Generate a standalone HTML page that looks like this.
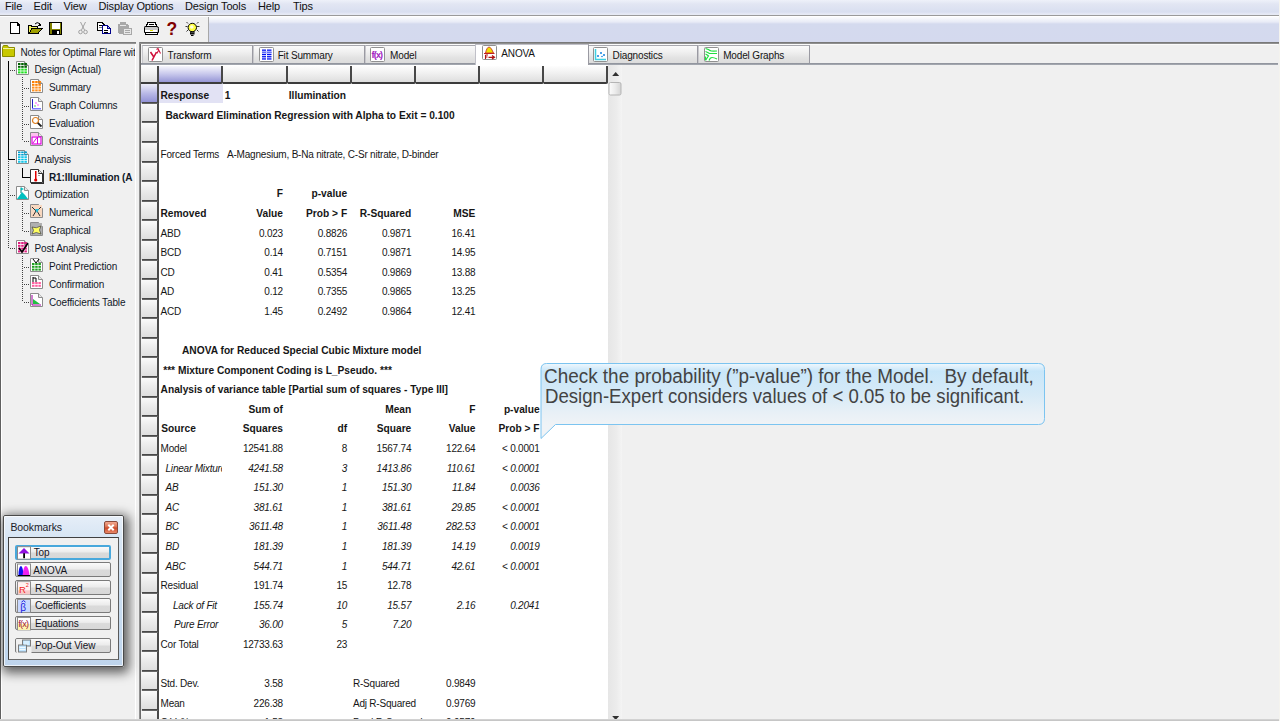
<!DOCTYPE html><html><head><meta charset="utf-8"><style>

*{margin:0;padding:0;box-sizing:border-box}
html,body{width:1280px;height:721px;overflow:hidden;background:#f0f0f0;font-family:"Liberation Sans",sans-serif;color:#000;position:relative}
.a{position:absolute}
.t{position:absolute;white-space:pre;line-height:1}
#menu{left:0;top:0;width:1280px;height:15px;background:linear-gradient(#eef1f9 0px,#e2e6f3 4px,#d9dff0 12px,#e6eaf5 14px)}
#menu span{position:absolute;top:0px;font-size:11px;letter-spacing:-0.15px;color:#101010}
#menuline{left:0;top:15px;width:1280px;height:1px;background:#9a9a9a}
#menuw{left:0;top:16px;width:1280px;height:1px;background:#fff}
#tb{left:0;top:17px;width:209px;height:25px;background:#f0f0f0}
#tbsep{left:208px;top:17px;width:1px;height:25px;background:#a8a8a8}
#tb2{left:209px;top:17px;width:1071px;height:25px;background:linear-gradient(#fbfcfe 0px,#e8ebf6 5px,#d4daee 7px,#d4d9ee 25px)}
#tb2line{left:139px;top:42px;width:1141px;height:2px;background:linear-gradient(#6e6e6e,#9a9a9a)}
#tb2w{left:141px;top:44px;width:1137px;height:1px;background:#fbfbfb}
#treetop{left:0;top:42px;width:136px;height:2px;background:linear-gradient(#707070,#a0a0a0)}
#treeleft{left:0;top:42px;width:1px;height:679px;background:#606060}
#treeleft2{left:1px;top:44px;width:1px;height:677px;background:#fff}
#treeright{left:135px;top:44px;width:1px;height:677px;background:#fff}
#cleft{left:139px;top:42px;width:1px;height:679px;background:#909090}
#cleft2{left:140px;top:44px;width:1px;height:677px;background:#6a6a6a}
#bottom{left:0;top:719px;width:1280px;height:2px;background:linear-gradient(#d8d8d8,#c0c0c0)}
.tab{position:absolute;top:45px;height:19px;background:linear-gradient(#fafafa 0px,#f0f0f0 6px,#e2e2e2 12px,#dadada 19px);border-top:1px solid #a8a8ae;border-left:1px solid #c8c8cc;border-right:1px solid #9a9aa2}
.tab .tl{position:absolute;top:5px;font-size:10px;color:#111}
.tab .ic{position:absolute;top:1px;width:14px;height:14px;background:#fff;border:1px solid #8c8c8c;border-radius:1px}
#tabline{left:141px;top:63px;width:1137px;height:2px;background:linear-gradient(#8a8e98,#a9adb5)}
#tabactive{left:475px;top:44px;width:114px;height:22px;background:#fff;border-top:1px solid #c0c0c8;border-left:1px solid #c0c0c8;border-right:1px solid #9a9aa2}


#grid{left:141px;top:65px;width:467px;height:654px;background:#fff;overflow:hidden}
.hc{position:absolute;background:linear-gradient(#fdfdfd,#f2f2f2 40%,#dedede);}
.rl{position:absolute;left:1px;width:16px;height:2px;background:linear-gradient(#3a3a3a,#767676)}
#sb{left:608px;top:65px;width:14px;height:654px;background:linear-gradient(90deg,#e6e6e6,#ececec 60%,#f4f4f4)}

</style></head><body>
<div class="a" id="menu">
<span style="left:5px">File</span>
<span style="left:33.5px">Edit</span>
<span style="left:63.5px">View</span>
<span style="left:98.5px">Display Options</span>
<span style="left:185px">Design Tools</span>
<span style="left:258px">Help</span>
<span style="left:293px">Tips</span>
</div>
<div class="a" id="menuline"></div>
<div class="a" id="menuw"></div>
<div class="a" id="tb"></div>
<div class="a" id="tbsep"></div>
<div class="a" id="tb2"></div>
<div class="a" id="tb2line"></div>
<div class="a" id="tb2w"></div>
<div class="a" id="treetop"></div>
<div class="a" id="treeleft"></div>
<div class="a" id="treeleft2"></div>
<div class="a" id="treeright"></div>
<div class="a" id="cleft"></div>
<div class="a" id="cleft2"></div>
<div class="a" id="bottom"></div>
<svg class="a" style="left:0;top:0" width="220" height="42" viewBox="0 0 220 42" shape-rendering="crispEdges">
<path d="M10.5 22.5 H17 L19.5 25 V33.5 H10.5 Z" fill="#fff" stroke="#000" stroke-width="1"/>
<path d="M17 22.5 V25 H19.5" fill="none" stroke="#000"/>
<path d="M28.5 25.5 H31 L32 26.5 H37.5 V28.5 H32 L29 33.5 H28.5 Z" fill="#f0f060" stroke="#000"/>
<path d="M29 33.5 L32 28.5 H42 L38 33.5 Z" fill="#a0a000" stroke="#000"/>
<path d="M35 24 Q37 21.5 39.5 23.5" fill="none" stroke="#000" shape-rendering="auto"/>
<path d="M39 22.5 L41.5 25.5 L38.5 25.5 Z" fill="#000"/>
<rect x="49" y="22" width="12.5" height="12.5" fill="#000"/>
<rect x="50" y="23" width="1.5" height="11" fill="#808000"/>
<rect x="59.5" y="23" width="1.5" height="11" fill="#808000"/>
<rect x="51.5" y="22.5" width="8" height="6" fill="#fff"/>
<rect x="51" y="28.5" width="9" height="1.5" fill="#808000"/>
<rect x="57" y="30.5" width="2" height="3" fill="#fff"/>
<g fill="none" stroke="#a0a0a0" stroke-width="1" shape-rendering="auto">
<path d="M80.5 22 L84.5 30 M85.5 22 L81.5 30"/>
<circle cx="80.5" cy="32" r="1.8"/><circle cx="85.5" cy="32" r="1.8"/></g>
<path d="M97.5 22.5 H102 L104 24.5 V30.5 H97.5 Z" fill="#fff" stroke="#000"/>
<rect x="99" y="25" width="3" height="1" fill="#000"/><rect x="99" y="27" width="3" height="1" fill="#808080"/>
<path d="M102.5 25.5 H107 L110 28.5 V33.5 H102.5 Z" fill="#fff" stroke="#00008a"/>
<path d="M107 25.5 V28.5 H110" fill="#c0c0ff" stroke="#00008a"/>
<rect x="104" y="30" width="4" height="1" fill="#000"/><rect x="104" y="32" width="4" height="1" fill="#000"/>
<rect x="117.5" y="23.5" width="11" height="10" rx="1" fill="#a8a8a8"/>
<rect x="120" y="22" width="6" height="2.5" fill="#a8a8a8"/><rect x="120" y="25" width="6" height="1" fill="#e8e8e8"/>
<rect x="123" y="28" width="8" height="6.5" fill="#e8e8e8" stroke="#a8a8a8"/>
<rect x="124.5" y="30" width="5" height="1" fill="#a8a8a8"/><rect x="124.5" y="32" width="5" height="1" fill="#a8a8a8"/>
<path d="M147.5 22.5 H155.5 L156.5 26.5 H146.5 Z" fill="#fff" stroke="#000"/>
<rect x="149" y="24" width="5" height="1" fill="#000"/>
<path d="M144.5 27.5 Q144 26.5 146 26.5 H157 Q158.5 26.5 158.5 28.5 V32.5 H144.5 Z" fill="#c8c8c8" stroke="#000" shape-rendering="auto"/>
<rect x="145" y="30" width="12" height="1.5" fill="#fff"/><rect x="150" y="29.5" width="3" height="1" fill="#e0e000"/>
<rect x="145.5" y="32.5" width="12" height="2" fill="#fff" stroke="#000"/>
<text x="166.6" y="35" font-family="Liberation Sans" font-weight="bold" font-size="17.5" fill="#800000">?</text>
<g shape-rendering="auto">
<circle cx="192.3" cy="27.5" r="4.2" fill="#ffff40" stroke="#000" stroke-width="1"/>
<circle cx="191.8" cy="27" r="1.8" fill="#ffffe0"/>
<rect x="190" y="31.5" width="4.5" height="3" fill="#000"/><rect x="190.5" y="32.5" width="3.5" height="0.6" fill="#888"/>
<path d="M191 35.5 H193.5" stroke="#000"/>
<path d="M185.5 26.5 H187.5 M197 26.5 H199.5 M186.5 22 L188 23.5 M198.5 22 L197 23.5 M186.5 31.5 L188 30 M198.5 31.5 L197 30" stroke="#222" stroke-width="0.9"/>
</g>
</svg>
<svg class="a" style="left:0;top:42px" width="136" height="280" viewBox="0 42 136 280">
<path d="M2.5 47.5 L3.5 45.5 H7.5 L8.5 47.5 H14.5 V56.5 H2.5 Z" fill="#c8c800" stroke="#8a8a00"/>
<rect x="3" y="48" width="11" height="1" fill="#f4f4a0"/>
<rect x="8" y="61" width="1" height="99" fill="#000"/>
<rect x="8" y="159" width="7" height="1" fill="#000"/>
<rect x="8" y="161" width="1" height="1" fill="#404040"/>
<rect x="8" y="163" width="1" height="1" fill="#404040"/>
<rect x="8" y="165" width="1" height="1" fill="#404040"/>
<rect x="8" y="167" width="1" height="1" fill="#404040"/>
<rect x="8" y="169" width="1" height="1" fill="#404040"/>
<rect x="8" y="171" width="1" height="1" fill="#404040"/>
<rect x="8" y="173" width="1" height="1" fill="#404040"/>
<rect x="8" y="175" width="1" height="1" fill="#404040"/>
<rect x="8" y="177" width="1" height="1" fill="#404040"/>
<rect x="8" y="179" width="1" height="1" fill="#404040"/>
<rect x="8" y="181" width="1" height="1" fill="#404040"/>
<rect x="8" y="183" width="1" height="1" fill="#404040"/>
<rect x="8" y="185" width="1" height="1" fill="#404040"/>
<rect x="8" y="187" width="1" height="1" fill="#404040"/>
<rect x="8" y="189" width="1" height="1" fill="#404040"/>
<rect x="8" y="191" width="1" height="1" fill="#404040"/>
<rect x="8" y="193" width="1" height="1" fill="#404040"/>
<rect x="8" y="195" width="1" height="1" fill="#404040"/>
<rect x="8" y="197" width="1" height="1" fill="#404040"/>
<rect x="8" y="199" width="1" height="1" fill="#404040"/>
<rect x="8" y="201" width="1" height="1" fill="#404040"/>
<rect x="8" y="203" width="1" height="1" fill="#404040"/>
<rect x="8" y="205" width="1" height="1" fill="#404040"/>
<rect x="8" y="207" width="1" height="1" fill="#404040"/>
<rect x="8" y="209" width="1" height="1" fill="#404040"/>
<rect x="8" y="211" width="1" height="1" fill="#404040"/>
<rect x="8" y="213" width="1" height="1" fill="#404040"/>
<rect x="8" y="215" width="1" height="1" fill="#404040"/>
<rect x="8" y="217" width="1" height="1" fill="#404040"/>
<rect x="8" y="219" width="1" height="1" fill="#404040"/>
<rect x="8" y="221" width="1" height="1" fill="#404040"/>
<rect x="8" y="223" width="1" height="1" fill="#404040"/>
<rect x="8" y="225" width="1" height="1" fill="#404040"/>
<rect x="8" y="227" width="1" height="1" fill="#404040"/>
<rect x="8" y="229" width="1" height="1" fill="#404040"/>
<rect x="8" y="231" width="1" height="1" fill="#404040"/>
<rect x="8" y="233" width="1" height="1" fill="#404040"/>
<rect x="8" y="235" width="1" height="1" fill="#404040"/>
<rect x="8" y="237" width="1" height="1" fill="#404040"/>
<rect x="8" y="239" width="1" height="1" fill="#404040"/>
<rect x="8" y="241" width="1" height="1" fill="#404040"/>
<rect x="8" y="243" width="1" height="1" fill="#404040"/>
<rect x="8" y="245" width="1" height="1" fill="#404040"/>
<rect x="8" y="247" width="1" height="1" fill="#404040"/>
<rect x="10" y="70" width="1" height="1" fill="#404040"/>
<rect x="12" y="70" width="1" height="1" fill="#404040"/>
<rect x="14" y="70" width="1" height="1" fill="#404040"/>
<rect x="10" y="195" width="1" height="1" fill="#404040"/>
<rect x="12" y="195" width="1" height="1" fill="#404040"/>
<rect x="14" y="195" width="1" height="1" fill="#404040"/>
<rect x="10" y="248" width="1" height="1" fill="#404040"/>
<rect x="12" y="248" width="1" height="1" fill="#404040"/>
<rect x="14" y="248" width="1" height="1" fill="#404040"/>
<rect x="22" y="77" width="1" height="1" fill="#404040"/>
<rect x="22" y="79" width="1" height="1" fill="#404040"/>
<rect x="22" y="81" width="1" height="1" fill="#404040"/>
<rect x="22" y="83" width="1" height="1" fill="#404040"/>
<rect x="22" y="85" width="1" height="1" fill="#404040"/>
<rect x="22" y="87" width="1" height="1" fill="#404040"/>
<rect x="22" y="89" width="1" height="1" fill="#404040"/>
<rect x="22" y="91" width="1" height="1" fill="#404040"/>
<rect x="22" y="93" width="1" height="1" fill="#404040"/>
<rect x="22" y="95" width="1" height="1" fill="#404040"/>
<rect x="22" y="97" width="1" height="1" fill="#404040"/>
<rect x="22" y="99" width="1" height="1" fill="#404040"/>
<rect x="22" y="101" width="1" height="1" fill="#404040"/>
<rect x="22" y="103" width="1" height="1" fill="#404040"/>
<rect x="22" y="105" width="1" height="1" fill="#404040"/>
<rect x="22" y="107" width="1" height="1" fill="#404040"/>
<rect x="22" y="109" width="1" height="1" fill="#404040"/>
<rect x="22" y="111" width="1" height="1" fill="#404040"/>
<rect x="22" y="113" width="1" height="1" fill="#404040"/>
<rect x="22" y="115" width="1" height="1" fill="#404040"/>
<rect x="22" y="117" width="1" height="1" fill="#404040"/>
<rect x="22" y="119" width="1" height="1" fill="#404040"/>
<rect x="22" y="121" width="1" height="1" fill="#404040"/>
<rect x="22" y="123" width="1" height="1" fill="#404040"/>
<rect x="22" y="125" width="1" height="1" fill="#404040"/>
<rect x="22" y="127" width="1" height="1" fill="#404040"/>
<rect x="22" y="129" width="1" height="1" fill="#404040"/>
<rect x="22" y="131" width="1" height="1" fill="#404040"/>
<rect x="22" y="133" width="1" height="1" fill="#404040"/>
<rect x="22" y="135" width="1" height="1" fill="#404040"/>
<rect x="22" y="137" width="1" height="1" fill="#404040"/>
<rect x="22" y="139" width="1" height="1" fill="#404040"/>
<rect x="24" y="88" width="1" height="1" fill="#404040"/>
<rect x="26" y="88" width="1" height="1" fill="#404040"/>
<rect x="28" y="88" width="1" height="1" fill="#404040"/>
<rect x="24" y="106" width="1" height="1" fill="#404040"/>
<rect x="26" y="106" width="1" height="1" fill="#404040"/>
<rect x="28" y="106" width="1" height="1" fill="#404040"/>
<rect x="24" y="124" width="1" height="1" fill="#404040"/>
<rect x="26" y="124" width="1" height="1" fill="#404040"/>
<rect x="28" y="124" width="1" height="1" fill="#404040"/>
<rect x="24" y="141" width="1" height="1" fill="#404040"/>
<rect x="26" y="141" width="1" height="1" fill="#404040"/>
<rect x="28" y="141" width="1" height="1" fill="#404040"/>
<rect x="22" y="202" width="1" height="1" fill="#404040"/>
<rect x="22" y="204" width="1" height="1" fill="#404040"/>
<rect x="22" y="206" width="1" height="1" fill="#404040"/>
<rect x="22" y="208" width="1" height="1" fill="#404040"/>
<rect x="22" y="210" width="1" height="1" fill="#404040"/>
<rect x="22" y="212" width="1" height="1" fill="#404040"/>
<rect x="22" y="214" width="1" height="1" fill="#404040"/>
<rect x="22" y="216" width="1" height="1" fill="#404040"/>
<rect x="22" y="218" width="1" height="1" fill="#404040"/>
<rect x="22" y="220" width="1" height="1" fill="#404040"/>
<rect x="22" y="222" width="1" height="1" fill="#404040"/>
<rect x="22" y="224" width="1" height="1" fill="#404040"/>
<rect x="22" y="226" width="1" height="1" fill="#404040"/>
<rect x="22" y="228" width="1" height="1" fill="#404040"/>
<rect x="22" y="230" width="1" height="1" fill="#404040"/>
<rect x="24" y="213" width="1" height="1" fill="#404040"/>
<rect x="26" y="213" width="1" height="1" fill="#404040"/>
<rect x="28" y="213" width="1" height="1" fill="#404040"/>
<rect x="24" y="231" width="1" height="1" fill="#404040"/>
<rect x="26" y="231" width="1" height="1" fill="#404040"/>
<rect x="28" y="231" width="1" height="1" fill="#404040"/>
<rect x="22" y="256" width="1" height="1" fill="#404040"/>
<rect x="22" y="258" width="1" height="1" fill="#404040"/>
<rect x="22" y="260" width="1" height="1" fill="#404040"/>
<rect x="22" y="262" width="1" height="1" fill="#404040"/>
<rect x="22" y="264" width="1" height="1" fill="#404040"/>
<rect x="22" y="266" width="1" height="1" fill="#404040"/>
<rect x="22" y="268" width="1" height="1" fill="#404040"/>
<rect x="22" y="270" width="1" height="1" fill="#404040"/>
<rect x="22" y="272" width="1" height="1" fill="#404040"/>
<rect x="22" y="274" width="1" height="1" fill="#404040"/>
<rect x="22" y="276" width="1" height="1" fill="#404040"/>
<rect x="22" y="278" width="1" height="1" fill="#404040"/>
<rect x="22" y="280" width="1" height="1" fill="#404040"/>
<rect x="22" y="282" width="1" height="1" fill="#404040"/>
<rect x="22" y="284" width="1" height="1" fill="#404040"/>
<rect x="22" y="286" width="1" height="1" fill="#404040"/>
<rect x="22" y="288" width="1" height="1" fill="#404040"/>
<rect x="22" y="290" width="1" height="1" fill="#404040"/>
<rect x="22" y="292" width="1" height="1" fill="#404040"/>
<rect x="22" y="294" width="1" height="1" fill="#404040"/>
<rect x="22" y="296" width="1" height="1" fill="#404040"/>
<rect x="22" y="298" width="1" height="1" fill="#404040"/>
<rect x="22" y="300" width="1" height="1" fill="#404040"/>
<rect x="24" y="267" width="1" height="1" fill="#404040"/>
<rect x="26" y="267" width="1" height="1" fill="#404040"/>
<rect x="28" y="267" width="1" height="1" fill="#404040"/>
<rect x="24" y="284" width="1" height="1" fill="#404040"/>
<rect x="26" y="284" width="1" height="1" fill="#404040"/>
<rect x="28" y="284" width="1" height="1" fill="#404040"/>
<rect x="24" y="302" width="1" height="1" fill="#404040"/>
<rect x="26" y="302" width="1" height="1" fill="#404040"/>
<rect x="28" y="302" width="1" height="1" fill="#404040"/>
<rect x="22" y="168" width="1" height="9" fill="#000"/><rect x="22" y="177" width="8" height="1" fill="#000"/>
<g transform="translate(16,61)"><path d="M0.5 0.5 H8.5 L12.5 4.5 V13.5 H0.5 Z" fill="#fff" stroke="#8c8c8c"/><path d="M8.5 0.5 V4.5 H12.5" fill="#e8e8e8" stroke="#8c8c8c"/><rect x="2.0" y="2.0" width="2.5" height="2" fill="#006000"/><rect x="5.2" y="2.0" width="2.5" height="2" fill="#006000"/><rect x="8.4" y="2.0" width="2.5" height="2" fill="#006000"/><rect x="2.0" y="4.8" width="2.5" height="2" fill="#006000"/><rect x="5.2" y="4.8" width="2.5" height="2" fill="#006000"/><rect x="8.4" y="4.8" width="2.5" height="2" fill="#006000"/><rect x="2.0" y="7.6" width="2.5" height="2" fill="#20e020"/><rect x="5.2" y="7.6" width="2.5" height="2" fill="#20e020"/><rect x="8.4" y="7.6" width="2.5" height="2" fill="#20e020"/><rect x="2.0" y="10.4" width="2.5" height="2" fill="#20e020"/><rect x="5.2" y="10.4" width="2.5" height="2" fill="#20e020"/><rect x="8.4" y="10.4" width="2.5" height="2" fill="#20e020"/></g>
<g transform="translate(30,79)"><path d="M0.5 0.5 H8.5 L12.5 4.5 V13.5 H0.5 Z" fill="#fff" stroke="#8c8c8c"/><path d="M8.5 0.5 V4.5 H12.5" fill="#e8e8e8" stroke="#8c8c8c"/><rect x="2.0" y="2.0" width="2.5" height="2" fill="#ff8000"/><rect x="5.2" y="2.0" width="2.5" height="2" fill="#ff8000"/><rect x="8.4" y="2.0" width="2.5" height="2" fill="#ff8000"/><rect x="2.0" y="4.8" width="2.5" height="2" fill="#ff8000"/><rect x="5.2" y="4.8" width="2.5" height="2" fill="#ff8000"/><rect x="8.4" y="4.8" width="2.5" height="2" fill="#ff8000"/><rect x="2.0" y="7.6" width="2.5" height="2" fill="#ff9020"/><rect x="5.2" y="7.6" width="2.5" height="2" fill="#ff9020"/><rect x="8.4" y="7.6" width="2.5" height="2" fill="#ff9020"/><rect x="2.0" y="10.4" width="2.5" height="2" fill="#ff9020"/><rect x="5.2" y="10.4" width="2.5" height="2" fill="#ff9020"/><rect x="8.4" y="10.4" width="2.5" height="2" fill="#ff9020"/></g>
<g transform="translate(30,97)"><path d="M0.5 0.5 H8.5 L12.5 4.5 V13.5 H0.5 Z" fill="#fff" stroke="#8c8c8c"/><path d="M8.5 0.5 V4.5 H12.5" fill="#e8e8e8" stroke="#8c8c8c"/><rect x="2" y="2" width="1" height="10" fill="#2020c0"/><rect x="2" y="11" width="9" height="1.5" fill="#8080ff"/><circle cx="6" cy="6" r="0.8" fill="#ff40ff"/><circle cx="8" cy="8" r="0.8" fill="#ff40ff"/><circle cx="5" cy="9" r="0.8" fill="#40c040"/></g>
<g transform="translate(30,115)"><path d="M0.5 0.5 H8.5 L12.5 4.5 V13.5 H0.5 Z" fill="#fff" stroke="#8c8c8c"/><path d="M8.5 0.5 V4.5 H12.5" fill="#e8e8e8" stroke="#8c8c8c"/><circle cx="5.5" cy="5.5" r="3" fill="#fff" stroke="#e08020" stroke-width="1.2"/><path d="M7.8 7.8 L11.5 11.5" stroke="#202020" stroke-width="1.8"/></g>
<g transform="translate(30,132)"><path d="M0.5 0.5 H8.5 L12.5 4.5 V13.5 H0.5 Z" fill="#fff" stroke="#8c8c8c"/><path d="M8.5 0.5 V4.5 H12.5" fill="#e8e8e8" stroke="#8c8c8c"/><rect x="1" y="1" width="7" height="3" fill="#ffc0f0"/><rect x="2" y="5" width="9" height="7" fill="none" stroke="#e000e0" stroke-width="1.2"/><path d="M3 11 L7 5.5 M7.5 5 V12" stroke="#e000e0"/></g>
<g transform="translate(16,150)"><path d="M0.5 0.5 H8.5 L12.5 4.5 V13.5 H0.5 Z" fill="#fff" stroke="#8c8c8c"/><path d="M8.5 0.5 V4.5 H12.5" fill="#e8e8e8" stroke="#8c8c8c"/><rect x="2.0" y="1.5" width="2.5" height="1.6" fill="#00a0d0"/><rect x="5.2" y="1.5" width="2.5" height="1.6" fill="#00a0d0"/><rect x="8.4" y="1.5" width="2.5" height="1.6" fill="#00a0d0"/><rect x="2.0" y="3.9" width="2.5" height="1.6" fill="#00a0d0"/><rect x="5.2" y="3.9" width="2.5" height="1.6" fill="#00a0d0"/><rect x="8.4" y="3.9" width="2.5" height="1.6" fill="#00a0d0"/><rect x="2.0" y="6.3" width="2.5" height="1.6" fill="#00c0e8"/><rect x="5.2" y="6.3" width="2.5" height="1.6" fill="#00c0e8"/><rect x="8.4" y="6.3" width="2.5" height="1.6" fill="#00c0e8"/><rect x="2.0" y="8.7" width="2.5" height="1.6" fill="#00c0e8"/><rect x="5.2" y="8.7" width="2.5" height="1.6" fill="#00c0e8"/><rect x="8.4" y="8.7" width="2.5" height="1.6" fill="#00c0e8"/><rect x="2.0" y="11.1" width="2.5" height="1.6" fill="#00c0e8"/><rect x="5.2" y="11.1" width="2.5" height="1.6" fill="#00c0e8"/><rect x="8.4" y="11.1" width="2.5" height="1.6" fill="#00c0e8"/></g>
<g transform="translate(30,169)"><path d="M0.5 0.5 H8.5 L12.5 4.5 V13.5 H0.5 Z" fill="#fff" stroke="#303030"/><path d="M8.5 0.5 V4.5 H12.5" fill="#e8e8e8" stroke="#303030"/><rect x="5" y="2" width="1.5" height="9" fill="#e00000"/><circle cx="5.7" cy="11" r="1.6" fill="#e00000"/><rect x="8" y="3" width="2" height="1" fill="#aaa"/><rect x="8" y="6" width="2" height="1" fill="#aaa"/></g>
<rect x="31" y="183" width="13" height="1" fill="#303030"/><rect x="43" y="170" width="1" height="14" fill="#303030"/>
<g transform="translate(16,186)"><path d="M0.5 0.5 H8.5 L12.5 4.5 V13.5 H0.5 Z" fill="#fff" stroke="#8c8c8c"/><path d="M8.5 0.5 V4.5 H12.5" fill="#e8e8e8" stroke="#8c8c8c"/><path d="M1 13 L6 6 L9 9 L12 13 Z" fill="#00c0c0"/><path d="M5 1.5 V7" stroke="#008080"/><path d="M5 1.5 L8 3 L5 4.5 Z" fill="#00c0c0"/></g>
<g transform="translate(30,204)"><path d="M0.5 0.5 H8.5 L12.5 4.5 V13.5 H0.5 Z" fill="#fff" stroke="#8c8c8c"/><path d="M8.5 0.5 V4.5 H12.5" fill="#e8e8e8" stroke="#8c8c8c"/><rect x="1" y="1" width="11" height="12" fill="#f8d8c0"/><path d="M2 3 L6 7 L3 12 M11 3 L7 7 L10 12" stroke="#303030" fill="none"/><path d="M5 5 H9 L7 9 Z" fill="#20c0e0"/></g>
<g transform="translate(30,222)"><path d="M0.5 0.5 H8.5 L12.5 4.5 V13.5 H0.5 Z" fill="#fff" stroke="#8c8c8c"/><path d="M8.5 0.5 V4.5 H12.5" fill="#e8e8e8" stroke="#8c8c8c"/><rect x="1" y="1" width="11" height="12" fill="#b0b0b0"/><path d="M2 5 Q6 7 11 4 Q8 8 11 12 Q6 9 2 12 Q5 8 2 5Z" fill="#ffff60" stroke="#303030" stroke-width="0.6"/></g>
<g transform="translate(16,240)"><path d="M0.5 0.5 H8.5 L12.5 4.5 V13.5 H0.5 Z" fill="#fff" stroke="#8c8c8c"/><path d="M8.5 0.5 V4.5 H12.5" fill="#e8e8e8" stroke="#8c8c8c"/><rect x="2.0" y="2.0" width="2.5" height="2" fill="#e02080"/><rect x="5.2" y="2.0" width="2.5" height="2" fill="#e02080"/><rect x="8.4" y="2.0" width="2.5" height="2" fill="#e02080"/><rect x="2.0" y="4.8" width="2.5" height="2" fill="#e02080"/><rect x="5.2" y="4.8" width="2.5" height="2" fill="#e02080"/><rect x="8.4" y="4.8" width="2.5" height="2" fill="#e02080"/><rect x="2.0" y="7.6" width="2.5" height="2" fill="#e02080"/><rect x="5.2" y="7.6" width="2.5" height="2" fill="#e02080"/><rect x="8.4" y="7.6" width="2.5" height="2" fill="#e02080"/><rect x="2.0" y="10.4" width="2.5" height="2" fill="#e02080"/><rect x="5.2" y="10.4" width="2.5" height="2" fill="#e02080"/><rect x="8.4" y="10.4" width="2.5" height="2" fill="#e02080"/><path d="M3 8 L6 12 L12 3" stroke="#000" stroke-width="1.6" fill="none"/></g>
<g transform="translate(30,258)"><path d="M0.5 0.5 H8.5 L12.5 4.5 V13.5 H0.5 Z" fill="#fff" stroke="#8c8c8c"/><path d="M8.5 0.5 V4.5 H12.5" fill="#e8e8e8" stroke="#8c8c8c"/><rect x="2.0" y="5.0" width="2.5" height="2" fill="#20a020"/><rect x="5.2" y="5.0" width="2.5" height="2" fill="#20a020"/><rect x="8.4" y="5.0" width="2.5" height="2" fill="#20a020"/><rect x="2.0" y="7.8" width="2.5" height="2" fill="#20a020"/><rect x="5.2" y="7.8" width="2.5" height="2" fill="#20a020"/><rect x="8.4" y="7.8" width="2.5" height="2" fill="#20a020"/><rect x="2.0" y="10.6" width="2.5" height="2" fill="#20a020"/><rect x="5.2" y="10.6" width="2.5" height="2" fill="#20a020"/><rect x="8.4" y="10.6" width="2.5" height="2" fill="#20a020"/><path d="M3 1 L6 5 L9 1" stroke="#000" fill="none"/></g>
<g transform="translate(30,275)"><path d="M0.5 0.5 H8.5 L12.5 4.5 V13.5 H0.5 Z" fill="#fff" stroke="#8c8c8c"/><path d="M8.5 0.5 V4.5 H12.5" fill="#e8e8e8" stroke="#8c8c8c"/><rect x="2.0" y="7.0" width="2.5" height="2" fill="#ff60a0"/><rect x="5.2" y="7.0" width="2.5" height="2" fill="#ff60a0"/><rect x="8.4" y="7.0" width="2.5" height="2" fill="#ff60a0"/><rect x="2.0" y="9.8" width="2.5" height="2" fill="#ff60a0"/><rect x="5.2" y="9.8" width="2.5" height="2" fill="#ff60a0"/><rect x="8.4" y="9.8" width="2.5" height="2" fill="#ff60a0"/><path d="M3 2 V7 M3 3 H6 V7" stroke="#000" fill="none"/></g>
<g transform="translate(30,293)"><path d="M0.5 0.5 H8.5 L12.5 4.5 V13.5 H0.5 Z" fill="#fff" stroke="#8c8c8c"/><path d="M8.5 0.5 V4.5 H12.5" fill="#e8e8e8" stroke="#8c8c8c"/><path d="M2 2 V12 H11" stroke="#a000a0" fill="none"/><path d="M3 6 L10 11 H3Z" fill="#20c040"/></g>
</svg>
<div class="a" style="left:0;top:42px;width:135px;height:280px;overflow:hidden">
<span class="t" style="left:20.5px;top:5.54px;font-size:10px;letter-spacing:-0.12px;color:#101828;">Notes for Optimal Flare wit</span>
<span class="t" style="left:34.5px;top:23.39px;font-size:10px;letter-spacing:-0.12px;color:#101828;">Design (Actual)</span>
<span class="t" style="left:49px;top:41.25px;font-size:10px;letter-spacing:-0.12px;color:#101828;">Summary</span>
<span class="t" style="left:49px;top:59.11px;font-size:10px;letter-spacing:-0.12px;color:#101828;">Graph Columns</span>
<span class="t" style="left:49px;top:76.97px;font-size:10px;letter-spacing:-0.12px;color:#101828;">Evaluation</span>
<span class="t" style="left:49px;top:94.84px;font-size:10px;letter-spacing:-0.12px;color:#101828;">Constraints</span>
<span class="t" style="left:34.5px;top:112.69px;font-size:10px;letter-spacing:-0.12px;color:#101828;">Analysis</span>
<span class="t" style="left:49px;top:130.55px;font-size:10px;letter-spacing:-0.12px;color:#101828;font-weight:bold;">R1:Illumination (A</span>
<span class="t" style="left:34.5px;top:148.41px;font-size:10px;letter-spacing:-0.12px;color:#101828;">Optimization</span>
<span class="t" style="left:49px;top:166.28px;font-size:10px;letter-spacing:-0.12px;color:#101828;">Numerical</span>
<span class="t" style="left:49px;top:184.13px;font-size:10px;letter-spacing:-0.12px;color:#101828;">Graphical</span>
<span class="t" style="left:34.5px;top:201.99px;font-size:10px;letter-spacing:-0.12px;color:#101828;">Post Analysis</span>
<span class="t" style="left:49px;top:219.85px;font-size:10px;letter-spacing:-0.12px;color:#101828;">Point Prediction</span>
<span class="t" style="left:49px;top:237.72px;font-size:10px;letter-spacing:-0.12px;color:#101828;">Confirmation</span>
<span class="t" style="left:49px;top:255.57px;font-size:10px;letter-spacing:-0.12px;color:#101828;">Coefficients Table</span>
</div>
<div class="tab" style="left:142.10px;width:111.25px"></div>
<div class="tab" style="left:253.35px;width:111.25px"></div>
<div class="tab" style="left:364.60px;width:111.25px"></div>
<div class="tab" style="left:587.10px;width:111.25px"></div>
<div class="tab" style="left:698.35px;width:111.25px"></div>
<div class="a" id="tabline"></div>
<div class="a" id="tabactive"></div>
<svg class="a" style="left:0;top:0" width="820" height="66" viewBox="0 0 820 66">
<rect x="148.5" y="47.5" width="14" height="14" rx="1" fill="#fff" stroke="#909090"/>
<g transform="translate(148,47)"><path d="M2.5 5 L5.5 9.5 M8.5 5 L4 13.5" stroke="#d0103a" stroke-width="1.6" fill="none"/><path d="M8.5 2.5 L10 1.5 L12.5 6.5 M10.5 3.5 L8.8 6.5" stroke="#d0103a" stroke-width="1.1" fill="none"/></g>
<rect x="259.5" y="47.5" width="14" height="14" rx="1" fill="#fff" stroke="#909090"/>
<g transform="translate(259,47)"><rect x="3" y="2.5" width="4" height="1.3" fill="#0010f0"/><rect x="8" y="2.5" width="4.5" height="1.3" fill="#0010f0"/><rect x="3" y="4.7" width="4" height="1.3" fill="#0010f0"/><rect x="8" y="4.7" width="4.5" height="1.3" fill="#0010f0"/><rect x="3" y="6.9" width="4" height="1.3" fill="#0010f0"/><rect x="8" y="6.9" width="4.5" height="1.3" fill="#0010f0"/><rect x="3" y="9.1" width="4" height="1.3" fill="#0010f0"/><rect x="8" y="9.1" width="4.5" height="1.3" fill="#0010f0"/><rect x="3" y="11.3" width="4" height="1.3" fill="#0010f0"/><rect x="8" y="11.3" width="4.5" height="1.3" fill="#0010f0"/><rect x="3" y="4" width="9.5" height="3" fill="#a0a8ff" opacity="0.6"/></g>
<rect x="370.5" y="47.5" width="14" height="14" rx="1" fill="#fff" stroke="#909090"/>
<g transform="translate(370,47)"><text x="1.5" y="11" font-family="Liberation Sans" font-size="9" fill="#a020c0" font-weight="bold" letter-spacing="-0.8">f(x)</text></g>
<rect x="482.5" y="45.5" width="14" height="14" rx="1" fill="#fff" stroke="#909090"/>
<g transform="translate(482,45)"><path d="M3.5 8 Q5 1.5 7.5 2 Q9.5 3 11.5 8 Z" fill="#f0e000" stroke="#c83030" stroke-width="0.9"/><path d="M2 8.5 H12.5" stroke="#c02020" stroke-width="1"/><path d="M3.5 10 V14 M3.5 10 H6 M3.5 12 H5.5" stroke="#b01010" stroke-width="1.1" fill="none"/><path d="M6.5 12.3 H12 M10 10.5 L12.5 12.3 L10 14" stroke="#b01010" fill="none" stroke-width="1.2"/></g>
<rect x="593.5" y="47.5" width="14" height="14" rx="1" fill="#fff" stroke="#909090"/>
<g transform="translate(593,47)"><path d="M2.5 2 V12.5 H13" stroke="#40d0e0" stroke-width="1.5" fill="none"/><circle cx="5" cy="9" r="1" fill="#1080e0"/><circle cx="8" cy="6" r="1" fill="#1080e0"/><circle cx="11" cy="8" r="1" fill="#1080e0"/><circle cx="9" cy="9.5" r="0.8" fill="#1080e0"/></g>
<rect x="704.5" y="47.5" width="14" height="14" rx="1" fill="#fff" stroke="#909090"/>
<g transform="translate(704,47)"><path d="M1.5 1.5 Q5 2.5 6 3.5 Q7 4.5 13 4 M1.5 4.5 Q4 5.5 5.5 6.5 H13 M1.5 7 Q3.5 8 4.5 9 Q3 11 1.5 13.5 M5 13.5 Q6 10.5 8 10.5 Q10 10.5 13 12 M1.5 9.5 V13" stroke="#20e040" stroke-width="1.2" fill="none"/></g>
</svg>
<span class="t" style="left:167.60px;top:51.28px;font-size:10px;letter-spacing:-0.15px;color:#141414">Transform</span>
<span class="t" style="left:277.65px;top:51.28px;font-size:10px;letter-spacing:-0.15px;color:#141414">Fit Summary</span>
<span class="t" style="left:390.10px;top:51.28px;font-size:10px;letter-spacing:-0.15px;color:#141414">Model</span>
<span class="t" style="left:501.35px;top:49.28px;font-size:10px;letter-spacing:-0.15px;color:#141414">ANOVA</span>
<span class="t" style="left:612.60px;top:51.28px;font-size:10px;letter-spacing:-0.15px;color:#141414">Diagnostics</span>
<span class="t" style="left:723.15px;top:51.28px;font-size:10px;letter-spacing:-0.15px;color:#141414">Model Graphs</span>
<div class="a" id="grid">
<div class="hc" style="left:17.00px;top:1px;width:65.00px;height:18px;background:linear-gradient(#f6f6fc,#c8c8ec 50%,#9696d6);border-right:2px solid #474747;border-bottom:2px solid #3c3c3c;border-bottom-right-radius:2px;border-top-left-radius:1px"></div>
<div class="hc" style="left:82.00px;top:1px;width:65.00px;height:18px;border-right:2px solid #474747;border-bottom:2px solid #3c3c3c;border-bottom-right-radius:2px;border-top-left-radius:1px"></div>
<div class="hc" style="left:147.00px;top:1px;width:64.00px;height:18px;border-right:2px solid #474747;border-bottom:2px solid #3c3c3c;border-bottom-right-radius:2px;border-top-left-radius:1px"></div>
<div class="hc" style="left:211.00px;top:1px;width:64.00px;height:18px;border-right:2px solid #474747;border-bottom:2px solid #3c3c3c;border-bottom-right-radius:2px;border-top-left-radius:1px"></div>
<div class="hc" style="left:275.00px;top:1px;width:64.00px;height:18px;border-right:2px solid #474747;border-bottom:2px solid #3c3c3c;border-bottom-right-radius:2px;border-top-left-radius:1px"></div>
<div class="hc" style="left:339.00px;top:1px;width:64.00px;height:18px;border-right:2px solid #474747;border-bottom:2px solid #3c3c3c;border-bottom-right-radius:2px;border-top-left-radius:1px"></div>
<div class="hc" style="left:403.00px;top:1px;width:64.00px;height:18px;border-right:2px solid #474747;border-bottom:2px solid #3c3c3c;border-bottom-right-radius:2px;border-top-left-radius:1px"></div>
<div class="hc" style="left:0;top:1px;width:17px;height:18px;border-bottom:2px solid #3c3c3c"></div>
<div class="a" style="left:0;top:19px;width:16px;height:640px;background:repeating-linear-gradient(#fafafa 0px,#ececec 8px,#dcdcdc 19.59px)"></div>
<div class="a" style="left:0;top:19px;width:16px;height:19px;background:linear-gradient(#ececf8,#b8b8e6 50%,#8e8ed4)"></div>
<div class="a" style="left:16px;top:1px;width:1.7px;height:654px;background:#4a4a4a"></div>
<div class="rl" style="top:36.79px"></div>
<div class="rl" style="top:56.38px"></div>
<div class="rl" style="top:75.97px"></div>
<div class="rl" style="top:95.56px"></div>
<div class="rl" style="top:115.15px"></div>
<div class="rl" style="top:134.74px"></div>
<div class="rl" style="top:154.33px"></div>
<div class="rl" style="top:173.92px"></div>
<div class="rl" style="top:193.51px"></div>
<div class="rl" style="top:213.10px"></div>
<div class="rl" style="top:232.69px"></div>
<div class="rl" style="top:252.28px"></div>
<div class="rl" style="top:271.87px"></div>
<div class="rl" style="top:291.46px"></div>
<div class="rl" style="top:311.05px"></div>
<div class="rl" style="top:330.64px"></div>
<div class="rl" style="top:350.23px"></div>
<div class="rl" style="top:369.82px"></div>
<div class="rl" style="top:389.41px"></div>
<div class="rl" style="top:409.00px"></div>
<div class="rl" style="top:428.59px"></div>
<div class="rl" style="top:448.18px"></div>
<div class="rl" style="top:467.77px"></div>
<div class="rl" style="top:487.36px"></div>
<div class="rl" style="top:506.95px"></div>
<div class="rl" style="top:526.54px"></div>
<div class="rl" style="top:546.13px"></div>
<div class="rl" style="top:565.72px"></div>
<div class="rl" style="top:585.31px"></div>
<div class="rl" style="top:604.90px"></div>
<div class="rl" style="top:624.49px"></div>
<div class="rl" style="top:644.08px"></div>
<div class="rl" style="top:663.67px"></div>
<div class="a" style="left:17.80px;top:19px;width:64.14px;height:18.5px;background:#e2e2f4"></div>
</div>
<div class="a" style="left:158px;top:84px;width:449px;height:635px;overflow:hidden"><div class="a" style="left:-158px;top:-84px;width:1280px;height:721px">
<span class="t" style="left:160.50px;top:91.26px;font-size:10.2px;font-weight:bold;color:#161616;">Response</span>
<span class="t" style="left:224.64px;top:91.26px;font-size:10.2px;font-weight:bold;color:#161616;">1</span>
<span class="t" style="left:288.78px;top:91.26px;font-size:10.2px;font-weight:bold;color:#161616;">Illumination</span>
<span class="t" style="left:165.50px;top:110.85px;font-size:10.2px;font-weight:bold;color:#161616;">Backward Elimination Regression with Alpha to Exit = 0.100</span>
<span class="t" style="left:160.60px;top:150.20px;font-size:10px;letter-spacing:-0.2px;color:#161616;">Forced Terms</span>
<span class="t" style="left:227.00px;top:150.20px;font-size:10px;letter-spacing:-0.2px;color:#161616;">A-Magnesium, B-Na nitrate, C-Sr nitrate, D-binder</span>
<span class="t" style="right:997.02px;top:189.21px;font-size:10.2px;font-weight:bold;color:#161616;">F</span>
<span class="t" style="right:932.88px;top:189.21px;font-size:10.2px;font-weight:bold;color:#161616;">p-value</span>
<span class="t" style="left:160.50px;top:208.80px;font-size:10.2px;font-weight:bold;color:#161616;">Removed</span>
<span class="t" style="right:997.02px;top:208.80px;font-size:10.2px;font-weight:bold;color:#161616;">Value</span>
<span class="t" style="right:932.88px;top:208.80px;font-size:10.2px;font-weight:bold;color:#161616;">Prob &gt; F</span>
<span class="t" style="right:868.74px;top:208.80px;font-size:10.2px;font-weight:bold;color:#161616;">R-Squared</span>
<span class="t" style="right:804.60px;top:208.80px;font-size:10.2px;font-weight:bold;color:#161616;">MSE</span>
<span class="t" style="left:160.50px;top:228.56px;font-size:10px;letter-spacing:-0.2px;color:#161616;">ABD</span>
<span class="t" style="right:997.02px;top:228.56px;font-size:10px;letter-spacing:-0.2px;color:#161616;">0.023</span>
<span class="t" style="right:932.88px;top:228.56px;font-size:10px;letter-spacing:-0.2px;color:#161616;">0.8826</span>
<span class="t" style="right:868.74px;top:228.56px;font-size:10px;letter-spacing:-0.2px;color:#161616;">0.9871</span>
<span class="t" style="right:804.60px;top:228.56px;font-size:10px;letter-spacing:-0.2px;color:#161616;">16.41</span>
<span class="t" style="left:160.50px;top:248.15px;font-size:10px;letter-spacing:-0.2px;color:#161616;">BCD</span>
<span class="t" style="right:997.02px;top:248.15px;font-size:10px;letter-spacing:-0.2px;color:#161616;">0.14</span>
<span class="t" style="right:932.88px;top:248.15px;font-size:10px;letter-spacing:-0.2px;color:#161616;">0.7151</span>
<span class="t" style="right:868.74px;top:248.15px;font-size:10px;letter-spacing:-0.2px;color:#161616;">0.9871</span>
<span class="t" style="right:804.60px;top:248.15px;font-size:10px;letter-spacing:-0.2px;color:#161616;">14.95</span>
<span class="t" style="left:160.50px;top:267.74px;font-size:10px;letter-spacing:-0.2px;color:#161616;">CD</span>
<span class="t" style="right:997.02px;top:267.74px;font-size:10px;letter-spacing:-0.2px;color:#161616;">0.41</span>
<span class="t" style="right:932.88px;top:267.74px;font-size:10px;letter-spacing:-0.2px;color:#161616;">0.5354</span>
<span class="t" style="right:868.74px;top:267.74px;font-size:10px;letter-spacing:-0.2px;color:#161616;">0.9869</span>
<span class="t" style="right:804.60px;top:267.74px;font-size:10px;letter-spacing:-0.2px;color:#161616;">13.88</span>
<span class="t" style="left:160.50px;top:287.33px;font-size:10px;letter-spacing:-0.2px;color:#161616;">AD</span>
<span class="t" style="right:997.02px;top:287.33px;font-size:10px;letter-spacing:-0.2px;color:#161616;">0.12</span>
<span class="t" style="right:932.88px;top:287.33px;font-size:10px;letter-spacing:-0.2px;color:#161616;">0.7355</span>
<span class="t" style="right:868.74px;top:287.33px;font-size:10px;letter-spacing:-0.2px;color:#161616;">0.9865</span>
<span class="t" style="right:804.60px;top:287.33px;font-size:10px;letter-spacing:-0.2px;color:#161616;">13.25</span>
<span class="t" style="left:160.50px;top:306.92px;font-size:10px;letter-spacing:-0.2px;color:#161616;">ACD</span>
<span class="t" style="right:997.02px;top:306.92px;font-size:10px;letter-spacing:-0.2px;color:#161616;">1.45</span>
<span class="t" style="right:932.88px;top:306.92px;font-size:10px;letter-spacing:-0.2px;color:#161616;">0.2492</span>
<span class="t" style="right:868.74px;top:306.92px;font-size:10px;letter-spacing:-0.2px;color:#161616;">0.9864</span>
<span class="t" style="right:804.60px;top:306.92px;font-size:10px;letter-spacing:-0.2px;color:#161616;">12.41</span>
<span class="t" style="left:182.00px;top:345.93px;font-size:10.2px;font-weight:bold;color:#161616;">ANOVA for Reduced Special Cubic Mixture model</span>
<span class="t" style="left:163.20px;top:365.52px;font-size:10.2px;font-weight:bold;color:#161616;">*** Mixture Component Coding is L_Pseudo. ***</span>
<span class="t" style="left:160.60px;top:385.11px;font-size:10.2px;font-weight:bold;color:#161616;">Analysis of variance table [Partial sum of squares - Type III]</span>
<span class="t" style="right:997.02px;top:404.70px;font-size:10.2px;font-weight:bold;color:#161616;">Sum of</span>
<span class="t" style="right:868.74px;top:404.70px;font-size:10.2px;font-weight:bold;color:#161616;">Mean</span>
<span class="t" style="right:804.60px;top:404.70px;font-size:10.2px;font-weight:bold;color:#161616;">F</span>
<span class="t" style="right:740.46px;top:404.70px;font-size:10.2px;font-weight:bold;color:#161616;">p-value</span>
<span class="t" style="left:161.30px;top:424.29px;font-size:10.2px;font-weight:bold;color:#161616;">Source</span>
<span class="t" style="right:997.02px;top:424.29px;font-size:10.2px;font-weight:bold;color:#161616;">Squares</span>
<span class="t" style="right:932.88px;top:424.29px;font-size:10.2px;font-weight:bold;color:#161616;">df</span>
<span class="t" style="right:868.74px;top:424.29px;font-size:10.2px;font-weight:bold;color:#161616;">Square</span>
<span class="t" style="right:804.60px;top:424.29px;font-size:10.2px;font-weight:bold;color:#161616;">Value</span>
<span class="t" style="right:740.46px;top:424.29px;font-size:10.2px;font-weight:bold;color:#161616;">Prob &gt; F</span>
<div class="a" style="left:158px;top:438.51px;width:63.94px;height:18px;overflow:hidden"><span class="t" style="left:2.60px;top:5.54px;font-size:10px;letter-spacing:-0.2px;color:#161616;">Model</span></div>
<span class="t" style="right:997.02px;top:444.05px;font-size:10px;letter-spacing:-0.2px;color:#161616;">12541.88</span>
<span class="t" style="right:932.88px;top:444.05px;font-size:10px;letter-spacing:-0.2px;color:#161616;">8</span>
<span class="t" style="right:868.74px;top:444.05px;font-size:10px;letter-spacing:-0.2px;color:#161616;">1567.74</span>
<span class="t" style="right:804.60px;top:444.05px;font-size:10px;letter-spacing:-0.2px;color:#161616;">122.64</span>
<span class="t" style="right:740.46px;top:444.05px;font-size:10px;letter-spacing:-0.2px;color:#161616;">&lt; 0.0001</span>
<div class="a" style="left:158px;top:458.10px;width:63.94px;height:18px;overflow:hidden"><span class="t" style="left:7.50px;top:5.54px;font-size:10px;font-style:italic;letter-spacing:-0.2px;color:#161616;">Linear Mixture</span></div>
<span class="t" style="right:997.02px;top:463.64px;font-size:10px;font-style:italic;letter-spacing:-0.2px;color:#161616;">4241.58</span>
<span class="t" style="right:932.88px;top:463.64px;font-size:10px;font-style:italic;letter-spacing:-0.2px;color:#161616;">3</span>
<span class="t" style="right:868.74px;top:463.64px;font-size:10px;font-style:italic;letter-spacing:-0.2px;color:#161616;">1413.86</span>
<span class="t" style="right:804.60px;top:463.64px;font-size:10px;font-style:italic;letter-spacing:-0.2px;color:#161616;">110.61</span>
<span class="t" style="right:740.46px;top:463.64px;font-size:10px;font-style:italic;letter-spacing:-0.2px;color:#161616;">&lt; 0.0001</span>
<div class="a" style="left:158px;top:477.69px;width:63.94px;height:18px;overflow:hidden"><span class="t" style="left:7.50px;top:5.54px;font-size:10px;font-style:italic;letter-spacing:-0.2px;color:#161616;">AB</span></div>
<span class="t" style="right:997.02px;top:483.23px;font-size:10px;font-style:italic;letter-spacing:-0.2px;color:#161616;">151.30</span>
<span class="t" style="right:932.88px;top:483.23px;font-size:10px;font-style:italic;letter-spacing:-0.2px;color:#161616;">1</span>
<span class="t" style="right:868.74px;top:483.23px;font-size:10px;font-style:italic;letter-spacing:-0.2px;color:#161616;">151.30</span>
<span class="t" style="right:804.60px;top:483.23px;font-size:10px;font-style:italic;letter-spacing:-0.2px;color:#161616;">11.84</span>
<span class="t" style="right:740.46px;top:483.23px;font-size:10px;font-style:italic;letter-spacing:-0.2px;color:#161616;">0.0036</span>
<div class="a" style="left:158px;top:497.28px;width:63.94px;height:18px;overflow:hidden"><span class="t" style="left:7.50px;top:5.54px;font-size:10px;font-style:italic;letter-spacing:-0.2px;color:#161616;">AC</span></div>
<span class="t" style="right:997.02px;top:502.82px;font-size:10px;font-style:italic;letter-spacing:-0.2px;color:#161616;">381.61</span>
<span class="t" style="right:932.88px;top:502.82px;font-size:10px;font-style:italic;letter-spacing:-0.2px;color:#161616;">1</span>
<span class="t" style="right:868.74px;top:502.82px;font-size:10px;font-style:italic;letter-spacing:-0.2px;color:#161616;">381.61</span>
<span class="t" style="right:804.60px;top:502.82px;font-size:10px;font-style:italic;letter-spacing:-0.2px;color:#161616;">29.85</span>
<span class="t" style="right:740.46px;top:502.82px;font-size:10px;font-style:italic;letter-spacing:-0.2px;color:#161616;">&lt; 0.0001</span>
<div class="a" style="left:158px;top:516.87px;width:63.94px;height:18px;overflow:hidden"><span class="t" style="left:7.50px;top:5.54px;font-size:10px;font-style:italic;letter-spacing:-0.2px;color:#161616;">BC</span></div>
<span class="t" style="right:997.02px;top:522.40px;font-size:10px;font-style:italic;letter-spacing:-0.2px;color:#161616;">3611.48</span>
<span class="t" style="right:932.88px;top:522.40px;font-size:10px;font-style:italic;letter-spacing:-0.2px;color:#161616;">1</span>
<span class="t" style="right:868.74px;top:522.40px;font-size:10px;font-style:italic;letter-spacing:-0.2px;color:#161616;">3611.48</span>
<span class="t" style="right:804.60px;top:522.40px;font-size:10px;font-style:italic;letter-spacing:-0.2px;color:#161616;">282.53</span>
<span class="t" style="right:740.46px;top:522.40px;font-size:10px;font-style:italic;letter-spacing:-0.2px;color:#161616;">&lt; 0.0001</span>
<div class="a" style="left:158px;top:536.46px;width:63.94px;height:18px;overflow:hidden"><span class="t" style="left:7.50px;top:5.54px;font-size:10px;font-style:italic;letter-spacing:-0.2px;color:#161616;">BD</span></div>
<span class="t" style="right:997.02px;top:541.99px;font-size:10px;font-style:italic;letter-spacing:-0.2px;color:#161616;">181.39</span>
<span class="t" style="right:932.88px;top:541.99px;font-size:10px;font-style:italic;letter-spacing:-0.2px;color:#161616;">1</span>
<span class="t" style="right:868.74px;top:541.99px;font-size:10px;font-style:italic;letter-spacing:-0.2px;color:#161616;">181.39</span>
<span class="t" style="right:804.60px;top:541.99px;font-size:10px;font-style:italic;letter-spacing:-0.2px;color:#161616;">14.19</span>
<span class="t" style="right:740.46px;top:541.99px;font-size:10px;font-style:italic;letter-spacing:-0.2px;color:#161616;">0.0019</span>
<div class="a" style="left:158px;top:556.05px;width:63.94px;height:18px;overflow:hidden"><span class="t" style="left:7.50px;top:5.54px;font-size:10px;font-style:italic;letter-spacing:-0.2px;color:#161616;">ABC</span></div>
<span class="t" style="right:997.02px;top:561.58px;font-size:10px;font-style:italic;letter-spacing:-0.2px;color:#161616;">544.71</span>
<span class="t" style="right:932.88px;top:561.58px;font-size:10px;font-style:italic;letter-spacing:-0.2px;color:#161616;">1</span>
<span class="t" style="right:868.74px;top:561.58px;font-size:10px;font-style:italic;letter-spacing:-0.2px;color:#161616;">544.71</span>
<span class="t" style="right:804.60px;top:561.58px;font-size:10px;font-style:italic;letter-spacing:-0.2px;color:#161616;">42.61</span>
<span class="t" style="right:740.46px;top:561.58px;font-size:10px;font-style:italic;letter-spacing:-0.2px;color:#161616;">&lt; 0.0001</span>
<div class="a" style="left:158px;top:575.64px;width:63.94px;height:18px;overflow:hidden"><span class="t" style="left:2.60px;top:5.54px;font-size:10px;letter-spacing:-0.2px;color:#161616;">Residual</span></div>
<span class="t" style="right:997.02px;top:581.17px;font-size:10px;letter-spacing:-0.2px;color:#161616;">191.74</span>
<span class="t" style="right:932.88px;top:581.17px;font-size:10px;letter-spacing:-0.2px;color:#161616;">15</span>
<span class="t" style="right:868.74px;top:581.17px;font-size:10px;letter-spacing:-0.2px;color:#161616;">12.78</span>
<div class="a" style="left:158px;top:595.23px;width:63.94px;height:18px;overflow:hidden"><span class="t" style="left:15.00px;top:5.54px;font-size:10px;font-style:italic;letter-spacing:-0.2px;color:#161616;">Lack of Fit</span></div>
<span class="t" style="right:997.02px;top:600.76px;font-size:10px;font-style:italic;letter-spacing:-0.2px;color:#161616;">155.74</span>
<span class="t" style="right:932.88px;top:600.76px;font-size:10px;font-style:italic;letter-spacing:-0.2px;color:#161616;">10</span>
<span class="t" style="right:868.74px;top:600.76px;font-size:10px;font-style:italic;letter-spacing:-0.2px;color:#161616;">15.57</span>
<span class="t" style="right:804.60px;top:600.76px;font-size:10px;font-style:italic;letter-spacing:-0.2px;color:#161616;">2.16</span>
<span class="t" style="right:740.46px;top:600.76px;font-size:10px;font-style:italic;letter-spacing:-0.2px;color:#161616;">0.2041</span>
<div class="a" style="left:158px;top:614.82px;width:63.94px;height:18px;overflow:hidden"><span class="t" style="left:16.00px;top:5.54px;font-size:10px;font-style:italic;letter-spacing:-0.2px;color:#161616;">Pure Error</span></div>
<span class="t" style="right:997.02px;top:620.35px;font-size:10px;font-style:italic;letter-spacing:-0.2px;color:#161616;">36.00</span>
<span class="t" style="right:932.88px;top:620.35px;font-size:10px;font-style:italic;letter-spacing:-0.2px;color:#161616;">5</span>
<span class="t" style="right:868.74px;top:620.35px;font-size:10px;font-style:italic;letter-spacing:-0.2px;color:#161616;">7.20</span>
<div class="a" style="left:158px;top:634.41px;width:63.94px;height:18px;overflow:hidden"><span class="t" style="left:2.60px;top:5.54px;font-size:10px;letter-spacing:-0.2px;color:#161616;">Cor Total</span></div>
<span class="t" style="right:997.02px;top:639.94px;font-size:10px;letter-spacing:-0.2px;color:#161616;">12733.63</span>
<span class="t" style="right:932.88px;top:639.94px;font-size:10px;letter-spacing:-0.2px;color:#161616;">23</span>
<span class="t" style="left:160.50px;top:679.12px;font-size:10px;letter-spacing:-0.2px;color:#161616;">Std. Dev.</span>
<span class="t" style="right:997.02px;top:679.12px;font-size:10px;letter-spacing:-0.2px;color:#161616;">3.58</span>
<span class="t" style="left:352.92px;top:679.12px;font-size:10px;letter-spacing:-0.2px;color:#161616;">R-Squared</span>
<span class="t" style="right:804.60px;top:679.12px;font-size:10px;letter-spacing:-0.2px;color:#161616;">0.9849</span>
<span class="t" style="left:160.50px;top:698.71px;font-size:10px;letter-spacing:-0.2px;color:#161616;">Mean</span>
<span class="t" style="right:997.02px;top:698.71px;font-size:10px;letter-spacing:-0.2px;color:#161616;">226.38</span>
<span class="t" style="left:352.92px;top:698.71px;font-size:10px;letter-spacing:-0.2px;color:#161616;">Adj R-Squared</span>
<span class="t" style="right:804.60px;top:698.71px;font-size:10px;letter-spacing:-0.2px;color:#161616;">0.9769</span>
<span class="t" style="left:160.50px;top:718.30px;font-size:10px;letter-spacing:-0.2px;color:#161616;">C.V. %</span>
<span class="t" style="right:997.02px;top:718.30px;font-size:10px;letter-spacing:-0.2px;color:#161616;">1.58</span>
<span class="t" style="left:352.92px;top:718.30px;font-size:10px;letter-spacing:-0.2px;color:#161616;">Pred R-Squared</span>
<span class="t" style="right:804.60px;top:718.30px;font-size:10px;letter-spacing:-0.2px;color:#161616;">0.9579</span>
</div></div>
<div class="a" id="sb"></div>
<svg class="a" style="left:607px;top:65px" width="15" height="654" viewBox="0 0 15 654"><path d="M5.2 11 L8.7 7 L12.2 11 Z" fill="#303030"/><rect x="2" y="17.5" width="12" height="12.5" rx="1.5" fill="url(#thg)" stroke="#b4b4b4"/><defs><linearGradient id="thg" x1="0" x2="1"><stop offset="0" stop-color="#fcfcfc"/><stop offset="0.5" stop-color="#ececec"/><stop offset="1" stop-color="#d4d4d4"/></linearGradient></defs><path d="M5.2 651 L8.7 655 L12.2 651 Z" fill="#303030"/></svg>
<svg class="a" style="left:530px;top:355px" width="525" height="95" viewBox="530 355 525 95">
<defs><linearGradient id="cg" x1="0" y1="363" x2="0" y2="425" gradientUnits="userSpaceOnUse">
<stop offset="0" stop-color="#f2f9fe"/><stop offset="0.06" stop-color="#dff0fb"/><stop offset="0.13" stop-color="#c8e6f9"/><stop offset="0.5" stop-color="#d6eaf7"/><stop offset="0.8" stop-color="#e8f0f6"/><stop offset="1" stop-color="#f0f3f6"/></linearGradient></defs>
<path d="M546.5 363.5 H1038.5 Q1044.5 363.5 1044.5 369.5 V418.5 Q1044.5 424.5 1038.5 424.5 H555.5 L541 438.5 V369.5 Q541 363.5 546.5 363.5 Z" fill="url(#cg)" stroke="#7cc4f0" stroke-width="1"/>
</svg>
<span class="t" style="left:544.30px;top:366.07px;font-size:20px;color:#434343;transform-origin:0 0;transform:scaleX(0.9456)">Check the probability (”p-value”) for the Model.&nbsp; By default,</span>
<span class="t" style="left:544.60px;top:386.07px;font-size:20px;color:#434343;transform-origin:0 0;transform:scaleX(0.930)">Design-Expert considers values of &lt; 0.05 to be significant.</span>
<div class="a" style="left:3px;top:515px;width:121px;height:152px;box-shadow:2px 3px 11px 3px rgba(0,0,0,0.6);border-radius:2px"></div>
<div class="a" style="left:3px;top:515px;width:121px;height:152px;background:linear-gradient(#e6eef8,#d8e6f4 20px,#c8dcf0 60%,#bed4ec);border:1px solid #4a4a4a;border-radius:2px"></div>
<div class="a" style="left:4px;top:516px;width:119px;height:150px;border:1px solid rgba(255,255,255,0.7);border-radius:1px"></div>
<span class="t" style="left:10.40px;top:521.51px;font-size:10.5px;color:#1a1a2a;letter-spacing:-0.1px">Bookmarks</span>
<div class="a" style="left:103.5px;top:520.5px;width:14.5px;height:13.5px;border:1px solid #8a4a3a;border-radius:2px;background:linear-gradient(#f0a890,#e07858 40%,#cc4a2a 55%,#e88868)"></div>
<svg class="a" style="left:103px;top:520px" width="16" height="15" viewBox="0 0 16 15"><path d="M5.3 4.8 L10.7 10.2 M10.7 4.8 L5.3 10.2" stroke="#fff" stroke-width="2"/></svg>
<div class="a" style="left:8px;top:537px;width:110.5px;height:123px;background:#f0f0f0;border-top:1px solid #404040;border-left:1px solid #404040;border-right:1px solid #5a5a5a;border-bottom:1px solid #6a6a6a"></div>
<div class="a" style="left:15px;top:545px;width:95.5px;height:14.8px;border:2px solid #48a8dc;border-radius:2px;background:linear-gradient(#fafafa,#ececec 45%,#dadada 55%,#d8d8d8)"></div>
<span class="t" style="left:33.70px;top:548.43px;font-size:10px;color:#14141e;letter-spacing:-0.1px">Top</span>
<div class="a" style="left:15px;top:562.3px;width:95.5px;height:14.8px;border:1px solid #7a7a7a;border-radius:2px;background:linear-gradient(#fafafa,#ececec 45%,#dadada 55%,#d8d8d8)"></div>
<span class="t" style="left:33.30px;top:565.73px;font-size:10px;color:#14141e;letter-spacing:-0.1px">ANOVA</span>
<div class="a" style="left:15px;top:580.1px;width:95.5px;height:14.8px;border:1px solid #7a7a7a;border-radius:2px;background:linear-gradient(#fafafa,#ececec 45%,#dadada 55%,#d8d8d8)"></div>
<span class="t" style="left:35.00px;top:583.53px;font-size:10px;color:#14141e;letter-spacing:-0.1px">R-Squared</span>
<div class="a" style="left:15px;top:597.9px;width:95.5px;height:14.8px;border:1px solid #7a7a7a;border-radius:2px;background:linear-gradient(#fafafa,#ececec 45%,#dadada 55%,#d8d8d8)"></div>
<span class="t" style="left:35.00px;top:601.33px;font-size:10px;color:#14141e;letter-spacing:-0.1px">Coefficients</span>
<div class="a" style="left:15px;top:615.7px;width:95.5px;height:14.8px;border:1px solid #7a7a7a;border-radius:2px;background:linear-gradient(#fafafa,#ececec 45%,#dadada 55%,#d8d8d8)"></div>
<span class="t" style="left:35.00px;top:619.13px;font-size:10px;color:#14141e;letter-spacing:-0.1px">Equations</span>
<div class="a" style="left:15px;top:638.3px;width:95.5px;height:14.8px;border:1px solid #7a7a7a;border-radius:2px;background:linear-gradient(#fafafa,#ececec 45%,#dadada 55%,#d8d8d8)"></div>
<span class="t" style="left:35.00px;top:641.03px;font-size:10px;color:#14141e;letter-spacing:-0.1px">Pop-Out View</span>
<svg class="a" style="left:0;top:540px" width="120" height="120" viewBox="0 540 120 120">
<rect x="17.5" y="546.7" width="13" height="12.5" fill="#fff" stroke="#8a8a8a"/>
<rect x="17.5" y="564.0" width="13" height="12.5" fill="#fff" stroke="#8a8a8a"/>
<rect x="17.5" y="581.8" width="13" height="12.5" fill="#fff" stroke="#8a8a8a"/>
<rect x="17.5" y="599.6" width="13" height="12.5" fill="#fff" stroke="#8a8a8a"/>
<rect x="17.5" y="617.4" width="13" height="12.5" fill="#fff" stroke="#8a8a8a"/>
<rect x="17.5" y="640.0" width="13" height="12.5" fill="#fff" stroke="#8a8a8a"/>
<path d="M24 548.0 L29.5 553.4000000000001 H18.5 Z" fill="#9010e0"/><rect x="23.2" y="553.2" width="1.8" height="5" fill="#000"/>
<path d="M18.5 575.5 Q18.5 566.5 21 566.0 Q23 566.5 23.5 575.5 Z" fill="#1010f0"/><path d="M22.5 575.5 Q23.5 565.5 26 566.0 Q28.5 566.5 29.5 575.5 Z" fill="#f020f0"/><rect x="18" y="575.0" width="12" height="1" fill="#000"/>
<rect x="18" y="582.3000000000001" width="12" height="12" fill="#fff0f0"/><rect x="18" y="590.3000000000001" width="12" height="4" fill="#f8c8c8"/><text x="19" y="592.8000000000001" font-family="Liberation Sans" font-size="9.5" fill="#f02020">R</text><text x="25.8" y="586.8000000000001" font-family="Liberation Sans" font-size="5.5" fill="#f02020">2</text>
<rect x="18" y="600.1" width="12" height="12" fill="#c8d8ff"/><text x="20.3" y="611.1" font-family="Liberation Sans" font-size="10" fill="#2020e0">β</text><path d="M21.5 602.1 L23.5 600.6 L25.5 602.1" stroke="#2020e0" fill="none"/>
<rect x="18" y="623.9000000000001" width="12" height="6" fill="#fff6b0"/><text x="18.2" y="627.4000000000001" font-family="Liberation Sans" font-size="9" fill="#a01030" letter-spacing="-0.7">f(x)</text>
<rect x="16.5" y="639.0" width="15" height="14" fill="#f0f0f0"/><rect x="22.5" y="640.0" width="8" height="6" fill="#bfe4ff" stroke="#7a7a7a"/><rect x="18.5" y="645.0" width="8" height="7" fill="#bfe4ff" stroke="#7a7a7a"/><path d="M24 642.0 H29 M24 644.0 H29 M19.5 647.5 H25.5 M19.5 649.5 H25.5" stroke="#fff" stroke-width="0.8"/>
</svg>
<div class="a" style="left:1279px;top:0;width:1px;height:721px;background:#f4f3ee"></div>
</body></html>
